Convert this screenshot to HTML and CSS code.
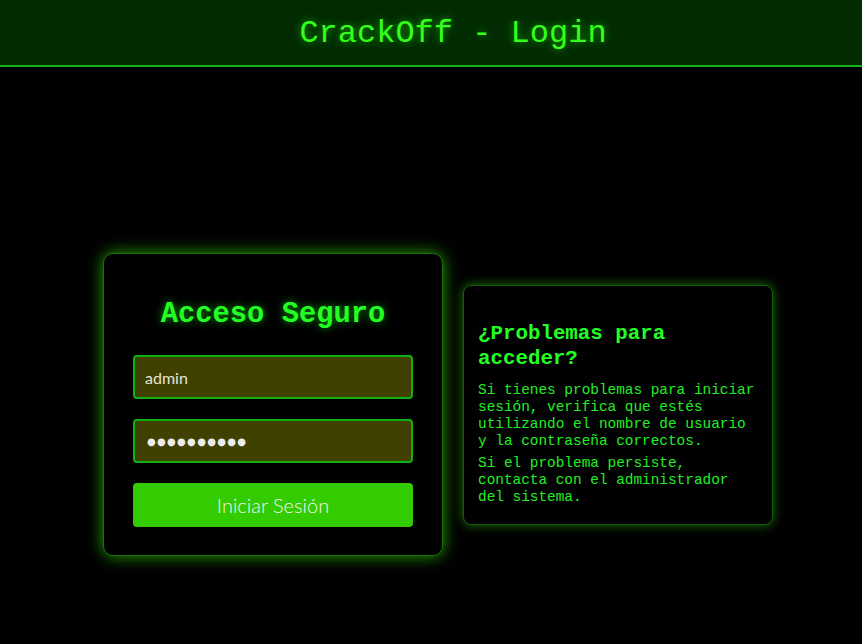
FILE: index.html
```html
<!DOCTYPE html>
<html lang="es">
<head>
<meta charset="utf-8">
<title>CrackOff - Login</title>
<link rel="stylesheet" href="styles.css">
</head>
<body>
<header class="topbar">
  <h1 class="brand">CrackOff - Login</h1>
</header>
<main class="main">
  <section class="login-card">
    <h2 class="login-title">Acceso Seguro</h2>
    <form class="login-form">
      <input class="field" type="text" value="admin" aria-label="Usuario">
      <input class="field field-secret" type="text" value="●●●●●●●●●●" aria-label="Contraseña">
      <button class="btn" type="button">Iniciar Sesión</button>
    </form>
  </section>
  <aside class="info-card">
    <h3 class="info-title">¿Problemas para acceder?</h3>
    <p class="info-text">Si tienes problemas para iniciar sesión, verifica que estés utilizando el nombre de usuario y la contraseña correctos.</p>
    <p class="info-text">Si el problema persiste, contacta con el administrador del sistema.</p>
  </aside>
</main>
</body>
</html>
```

FILE: styles.css
```css
* { box-sizing: border-box; }
html, body { margin: 0; padding: 0; background: #000; }
body {
  font-family: "Liberation Mono", "DejaVu Sans Mono", monospace;
  color: #33ff33;
  height: 644px;
  overflow: hidden;
}
.topbar {
  height: 67px;
  background: #022b02;
  border-bottom: 2px solid #17b317;
  display: flex;
  align-items: center;
  justify-content: center;
  padding-left: 44px;
  padding-top: 2px;
}
.brand {
  margin: 0;
  font-size: 32px;
  font-weight: normal;
  color: #33ff1a;
  text-shadow: 0 0 8px rgba(40, 255, 20, 0.6);
  line-height: 1;
}
.main {
  display: flex;
  align-items: center;
  justify-content: center;
  gap: 20px;
  padding-left: 14px;
  padding-top: 186px;
}
.login-card {
  width: 340px;
  height: 303px;
  background: #000;
  border: 1px solid #1d7012;
  border-radius: 10px;
  box-shadow: 0 0 16px rgba(51, 220, 0, 0.75);
  padding: 30px 29px;
}
.login-title {
  margin: 10px 0 19px;
  text-align: center;
  font-size: 28.8px;
  font-weight: bold;
  color: #22ff22;
  line-height: 42px;
  text-shadow: 0 0 8px rgba(30, 255, 30, 0.6);
}
.login-form {
  display: flex;
  flex-direction: column;
  gap: 20px;
}
.field {
  width: 280px;
  height: 44px;
  background: #404000;
  border: 2px solid #11b011;
  border-radius: 4px;
  color: #e6e6d8;
  font-family: Lato, "Noto Sans", sans-serif;
  font-size: 16px;
  padding: 0 10px;
  outline: none;
}
.field-secret {
  font-family: "DejaVu Sans", sans-serif;
  font-size: 10px;
  letter-spacing: 1.3px;
  padding-left: 12px;
  color: #ececec;
}
.btn {
  width: 280px;
  height: 44px;
  background: #33cc00;
  border: none;
  border-radius: 4px;
  color: #f2f2f2;
  font-family: Lato, "Noto Sans", sans-serif;
  font-weight: 300;
  font-size: 20px;
  padding: 0;
}
.info-card {
  width: 310px;
  height: 240px;
  background: #010103;
  border: 1px solid #185a10;
  border-radius: 8px;
  box-shadow: 0 0 11px rgba(50, 200, 0, 0.6);
  padding: 15px 14px;
}
.info-title {
  margin: 20px 0 11px;
  font-size: 20.8px;
  font-weight: bold;
  line-height: 25px;
  color: #22ff22;
}
.info-text {
  margin: 0 0 5px;
  font-size: 14.4px;
  line-height: 17px;
  color: #22ee22;
}
```
